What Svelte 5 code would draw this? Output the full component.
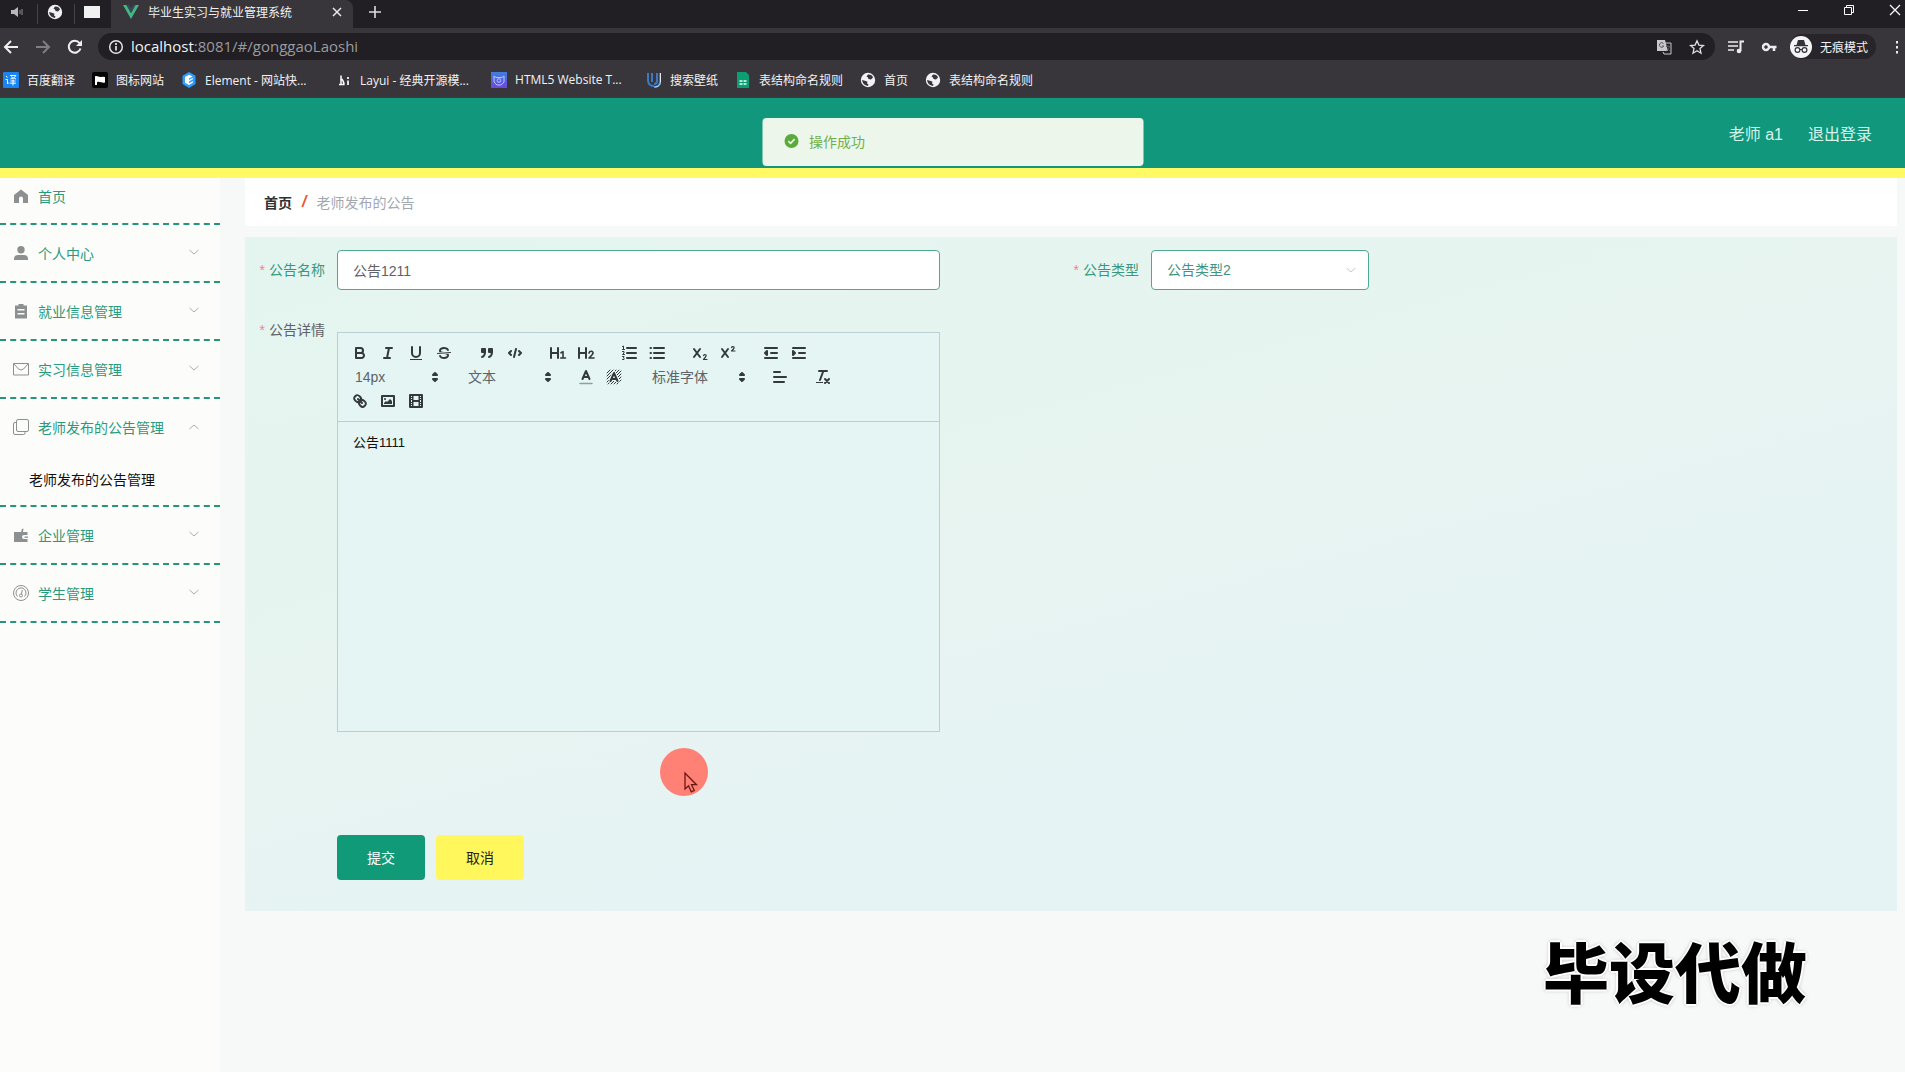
<script lang="ts">
	type Tool = { kind: 'button'; icon: string; label: string } | { kind: 'picker'; label: string; value: string; wide?: boolean };

	const bookmarks = [
		{ icon: 'translate', text: '百度翻译' },
		{ icon: 'flag', text: '图标网站' },
		{ icon: 'element', text: 'Element - 网站快...', cut: true },
		{ icon: 'layui', text: 'Layui - 经典开源模...', cut: true },
		{ icon: 'html5', text: 'HTML5 Website T...', cut: true },
		{ icon: 'wallpaper', text: '搜索壁纸' },
		{ icon: 'sheet', text: '表结构命名规则' },
		{ icon: 'globe', text: '首页' },
		{ icon: 'globe', text: '表结构命名规则' }
	];

	const siteIcons: Record<string, string> = {
		translate: '<rect width="16" height="16" rx="1" fill="#1a84f2"/><path d="M3 4l1.500 1.500M2.500 7.500h2v4.500l1.500-1.500M7 3.500h6c-1 2-3 3-5.500 3.500M8 4.500c1.500 1.500 3 2 5 2.500M7.500 9h5M7 11.200h6M10 7.500v6" stroke="#fff" fill="none"/>',
		flag: '<rect width="16" height="16" rx="2" fill="#050505"/><path d="M3 4.500c2-1.500 4 1.500 7 .2l3 .3v5.500c-3 1-5-1.500-8-.3V13H3z" fill="#fff"/>',
		element: '<path d="M8 0l6.500 3.700v8.400L8 16l-6.500-3.900V3.700z" fill="#2c9cff"/><path d="M11.500 4.500L8 2.700 4 5v5.700l4 2.300 3.800-2.200V9L8 11.200V9.500l3.800-2.200V5.800L8 8V6.500z" fill="#fff"/>',
		layui: '<path d="M3 12.500h5.500M5 3.500v9M5 6.500c2 1.500 3 3.500 3 6" stroke="#fff" stroke-width="1.500" fill="none"/><path d="M11 5h2v2h-2zM11 8.500h2V13h-2z" fill="#ddd"/>',
		html5: '<defs><linearGradient id="violet" x1="0" y1="0" x2="0" y2="1"><stop offset="0" stop-color="#3f7fe0"/><stop offset="1" stop-color="#7146dc"/></linearGradient></defs><rect width="16" height="16" fill="url(#violet)"/><path d="M3 4l2 1.500h6L13 4v6l-3 3H6l-3-3z" fill="none" stroke="#b3c7ff"/><circle cx="8" cy="8.500" r="1.800" fill="none" stroke="#b3c7ff"/>',
		wallpaper: '<path d="M2 1v7c0 4 2 6 6 6M6 1v9M11 1v8c0 2-1 3-3 3M14 1v8c0 4-2 6-6 6" fill="none" stroke="#3b79c5" stroke-width="2"/><path d="M14.500 1v8c0 4-2 6-6 6" fill="none" stroke="#d8e6f5"/>',
		sheet: '<path d="M2 0h9l3 3v13H2z" fill="#0c9d74"/><path d="M4.500 9h3M8.500 9h3M4.500 12h3M8.500 12h3" stroke="#e9fff5" stroke-width="1.500"/>',
		globe: '<circle cx="8" cy="8" r="7.200" fill="#f2f2f4"/><path d="M8 2.500c2.500-.3 4.500 1 5 3l-2 2-2.500-.5L8 5.500 6.500 4.500zM2 8l3 .7 2.500 1-.5 1.800 1.500 1-.5 1.500C4.500 13.500 2.500 11.500 2 8z" fill="#37353a"/>'
	};

	const menu = [
		{ icon: 'home', text: '首页' },
		{ icon: 'user', text: '个人中心', arrow: 'down' },
		{ icon: 'order', text: '就业信息管理', arrow: 'down' },
		{ icon: 'message', text: '实习信息管理', arrow: 'down' },
		{ icon: 'copy', text: '老师发布的公告管理', arrow: 'up', children: ['老师发布的公告管理'] },
		{ icon: 'wallet', text: '企业管理', arrow: 'down' },
		{ icon: 'odometer', text: '学生管理', arrow: 'down' }
	];

	const menuIcons: Record<string, string> = {
		home: '<path d="M8 1.500L1 7V15h5v-4.500a2 2 0 0 1 4 0V15h5V7z"/>',
		user: '<circle cx="8" cy="4.700" r="3.700"/><path d="M1 15v-1.500C1 11 3 10 5 10h6c2 0 4 1 4 3.500V15z"/>',
		order: '<path fill-rule="evenodd" d="M2 2.500h3.500V1h5v1.500H14V15.500H2zM4.500 6v1.500h7V6zm0 4v1.500h7V10z"/>',
		message: '<path d="M.500 2.500h15v11.500H.500zM1 3l4.500 5q2.500 2 5 0L15 3" class="line"/>',
		copy: '<rect x="3.500" y=".500" width="12" height="12" rx="1.500" class="line"/><path d="M3.500 3.500H2q-1.500 0-1.500 1.500v9q0 1.500 1.500 1.500h8.500q1.500 0 1.500-1.500v-1.500" class="line"/>',
		wallet: '<path d="M1 5h7l1-3 1.500-.5L10 5h4.500v3H11a2 2 0 0 0 0 4h3.500v3H1z"/><path d="M11.500 9.500H15v1.300h-3.500z"/>',
		odometer: '<circle cx="8" cy="8" r="7.500" class="line"/><path d="M4.500 11.500a5 5 0 1 1 7 0M8.500 9l.7-4" class="line"/><circle cx="8" cy="10.500" r="1.500" class="line"/>'
	};

	const toolIcons: Record<string, string> = {
		bold: '<path d="M5,4H9.500A2.500,2.500,0,0,1,12,6.500v0A2.500,2.500,0,0,1,9.500,9H5V4Z"/><path d="M5,9h5.500A2.500,2.500,0,0,1,13,11.500v0A2.500,2.500,0,0,1,10.500,14H5V9Z"/>',
		italic: '<path d="M7 4h6M5 14h6M8 14L10 4"/>',
		underline: '<path d="M5,3V9a4,4,0,0,0,4,4H9a4,4,0,0,0,4-4V3"/><rect class="fill" height="1" width="12" x="3" y="15"/>',
		strike: '<path d="M15.500 8.500L2.500 9.500" stroke-width="1"/><path class="fill" d="M9.007,8C6.542,7.791,6,7.519,6,6.500,6,5.792,7.283,5,9,5c1.571,0,2.765.679,2.969,1.309a1,1,0,0,0,1.900-.617C13.356,4.106,11.354,3,9,3,6.200,3,4,4.538,4,6.500a3.200,3.200,0,0,0,.500,1.843Z"/><path class="fill" d="M8.984,10C11.457,10.208,12,10.479,12,11.500c0,.708-1.283,1.500-3,1.500-1.571,0-2.765-.679-2.969-1.309a1,1,0,1,0-1.900.617C4.644,13.894,6.646,15,9,15c2.800,0,5-1.538,5-3.500a3.200,3.200,0,0,0-.500-1.843Z"/>',
		quote: '<rect class="both" height="3" width="3" x="4" y="5"/><rect class="both" height="3" width="3" x="11" y="5"/><path d="M7,8c0,4.031-3,5-3,5M14,8c0,4.031-3,5-3,5"/>',
		code: '<path d="M5 7L3 9l2 2M13 7l2 2-2 2M10 5L8 13"/>',
		h1: '<path d="M2 4v10M9 4v10M2 9h7"/><path d="M12 8.800L14 7.600V14M11.700 14h4.800" stroke-width="1.600"/>',
		h2: '<path d="M2 4v10M9 4v10M2 9h7"/><path d="M12 9q.5-1.800 2.300-1.700 2 .3 1.700 2-.5 1.500-4 4.700h5" stroke-width="1.600"/>',
		ordered: '<path d="M7 4h9M7 9h9M7 14h9"/><path d="M2.500 2.500l1-.5v3.500M2.500 5.500h2M2.500 7.500h1.500v1.500l-1.500 1.500h2M2.500 12.500H4l-.5 1.500q1 .5.500 1.500H2.500" stroke-width="1"/>',
		bullet: '<path d="M6 4h10M6 9h10M6 14h10"/><path d="M2.500 4h.5M2.500 9h.5M2.500 14h.5"/>',
		sub: '<path d="M3 5l6 8M9 5l-6 8"/><path d="M12.500 11.500q1-1.500 2.500-.5.800 1-2.500 4.500h3.500" stroke-width="1.200"/>',
		sup: '<path d="M3 5l6 8M9 5l-6 8"/><path d="M12.500 3.500Q13.500 2 15 3q.8 1-2.500 4h3.500" stroke-width="1.200"/>',
		outdent: '<path d="M3 14h12M3 4h12M9 9h6"/><path class="both" d="M5 7v4L3 9z"/>',
		indent: '<path d="M3 14h12M3 4h12M9 9h6"/><path class="both" d="M3 7v4l2-2z"/>',
		color: '<path d="M3 15.500h12" stroke="#8da09f" stroke-width="1.500"/><path d="M5.500 11L9 3l3.500 8M11.600 9H6.400"/>',
		background: '<path d="M2 5l3-3M2 8l6-6M2 11l9-9M2 14L14 2M3 16L16 3M6 16L16 6M9 16l7-7M12 16l4-4" stroke-width="1"/><path d="M5.500 13L9 5l3.500 8M11.500 11h-5" stroke="#e4f4f4" stroke-width="4"/><path d="M5.500 13L9 5l3.500 8M11.600 11H6.400"/>',
		align: '<path d="M3 9h12M3 14h10M3 4h6"/>',
		clean: '<path d="M5 3h8M6 12L9.350 3M11 11l4 4M15 11l-4 4"/><rect class="fill" height="1" width="7" x="2" y="14"/>',
		link: '<path d="M7 7l4 4"/><path d="M8.900,4.577a3.476,3.476,0,0,1,.360,4.679A3.476,3.476,0,0,1,4.577,8.900C3.185,7.500,2.035,6.400,4.217,4.217S7.500,3.185,8.900,4.577Z"/><path d="M13.423,9.100a3.476,3.476,0,0,0-4.679-.360,3.476,3.476,0,0,0,.360,4.679c1.392,1.392,2.500,2.542,4.679.360S14.815,10.500,13.423,9.100Z"/>',
		image: '<rect height="10" width="12" x="3" y="4"/><circle class="fill" cx="6" cy="7" r="1"/><path class="fill" d="M5 12v-1l2-2 1 1 3-3 2 2v3z"/>',
		video: '<rect height="12" width="12" x="3" y="3"/><path class="fill" d="M5 3h1.500v12H5zM11.500 3H13v12h-1.500zM5 8h8v2H5zM3 5h3v1H3zM3 7h3v1H3zM3 10h3v1H3zM3 12h3v1H3zM12 5h3v1h-3zM12 7h3v1h-3zM12 10h3v1h-3zM12 12h3v1h-3z"/>'
	};

	const btn = (icon: string, label: string): Tool => ({ kind: 'button', icon, label });

	const toolbar: Tool[][] = [
		[btn('bold', '加粗'), btn('italic', '斜体'), btn('underline', '下划线'), btn('strike', '删除线')],
		[btn('quote', '引用'), btn('code', '代码')],
		[btn('h1', '标题1'), btn('h2', '标题2')],
		[btn('ordered', '有序列表'), btn('bullet', '无序列表')],
		[btn('sub', '下标'), btn('sup', '上标')],
		[btn('outdent', '减少缩进'), btn('indent', '增加缩进')],
		[{ kind: 'picker', label: '字号', value: '14px' }],
		[{ kind: 'picker', label: '段落', value: '文本' }],
		[btn('color', '文字颜色'), btn('background', '背景颜色')],
		[{ kind: 'picker', label: '字体', value: '标准字体', wide: true }],
		[btn('align', '对齐')],
		[btn('clean', '清除格式')],
		[btn('link', '链接'), btn('image', '图片'), btn('video', '视频')]
	];

	let title = $state('公告1211');
	let noticeType = $state('公告类型2');
</script>

<svelte:head>
	<title>毕业生实习与就业管理系统</title>
</svelte:head>

<div class="screen">
	<div class="chrome">
		<div class="tabs">
			<div class="tabs__pinned">
				<svg width="16" height="16" viewBox="0 0 16 16"><path d="M2 6h3l4-3v10L5 10H2z" fill="#b9b9bb" /><path d="M11 6v4M13 5v6" stroke="#8d8d90" /></svg>
			</div>
			<div class="tabs__pinned">
				<svg width="16" height="16" viewBox="0 0 16 16">{@html siteIcons.globe}</svg>
			</div>
			<div class="tabs__pinned">
				<svg width="18" height="16" viewBox="0 0 18 16"><rect x="1" y="2" width="16" height="12" fill="#f1f1f1" /></svg>
			</div>
			<div class="tabs__active">
				<svg width="16" height="16" viewBox="0 0 16 16"><path d="M0 1h3.500L8 9l4.500-8H16L8 15z" fill="#41b883" /><path d="M3.500 1H6l2 3.500L10 1h2.500L8 9z" fill="#35495e" /></svg>
				<span class="tabs__title">毕业生实习与就业管理系统</span>
				<button class="icon-btn" aria-label="关闭标签页">
					<svg width="10" height="10" viewBox="0 0 10 10"><path d="M1 1l8 8M9 1l-8 8" stroke="#e8e8ea" stroke-width="1.500" /></svg>
				</button>
			</div>
			<button class="icon-btn tabs__new" aria-label="新标签页">
				<svg width="12" height="12" viewBox="0 0 12 12"><path d="M6 0v12M0 6h12" stroke="#dcdcde" stroke-width="1.600" /></svg>
			</button>
			<div class="window-controls">
				<button class="icon-btn" aria-label="最小化"><svg width="12" height="12" viewBox="0 0 12 12"><path d="M1 6.500h10" stroke="#fff" /></svg></button>
				<button class="icon-btn" aria-label="还原"><svg width="12" height="12" viewBox="0 0 12 12"><path d="M1.500 3.500h7v7h-7zM3.500 3V1.500h7v7H9" stroke="#fff" fill="none" /></svg></button>
				<button class="icon-btn" aria-label="关闭"><svg width="12" height="12" viewBox="0 0 12 12"><path d="M1 1l10 10M11 1L1 11" stroke="#fff" stroke-width="1.200" /></svg></button>
			</div>
		</div>

		<div class="address">
			<div class="address__nav">
				<button class="icon-btn" aria-label="后退"><svg width="16" height="16" viewBox="0 0 16 16"><path d="M15 8H2M8 2L2 8l6 6" stroke="#f0f0f0" stroke-width="2" fill="none" /></svg></button>
				<button class="icon-btn" aria-label="前进"><svg width="16" height="16" viewBox="0 0 16 16"><path d="M1 8h13M8 2l6 6-6 6" stroke="#7f7e82" stroke-width="2" fill="none" /></svg></button>
				<button class="icon-btn" aria-label="刷新"><svg width="16" height="16" viewBox="0 0 16 16"><path d="M13.500 9.500A6 6 0 1 1 12.500 4" stroke="#f0f0f0" stroke-width="2" fill="none" /><path d="M15 1v6H9z" fill="#f0f0f0" /></svg></button>
			</div>
			<div class="address__bar">
				<svg width="16" height="16" viewBox="0 0 16 16"><circle cx="8" cy="8" r="6.300" stroke="#e4e4e6" stroke-width="1.500" fill="none" /><path d="M8 7v4.500M8 4v2" stroke="#e4e4e6" stroke-width="1.700" /></svg>
				<span class="address__url"><b>localhost</b>:8081/#/gonggaoLaoshi</span>
				<button class="icon-btn" aria-label="翻译此页"><svg width="16" height="16" viewBox="0 0 16 16"><path d="M1 1h8l3 11H1z" fill="#c9c9cb" /><path d="M9.500 4H15v11H8l-1-2" stroke="#c9c9cb" fill="none" /><path d="M7.500 4.500a2.300 2.300 0 1 0 .3 2.500H6M10 7.500h4M12 6v1.500M13.500 8c-.5 2-1.500 3-3 4M11 9l3 3" stroke="#55545a" fill="none" /></svg></button>
				<button class="icon-btn" aria-label="收藏"><svg width="16" height="16" viewBox="0 0 16 16"><path d="M8 1.800l1.900 4.300 4.600.4-3.500 3.100 1 4.600L8 11.800l-4 2.400 1-4.600L1.500 6.500l4.600-.4z" stroke="#e0e0e2" stroke-width="1.300" fill="none" /></svg></button>
			</div>
			<button class="icon-btn" aria-label="媒体控制"><svg width="16" height="16" viewBox="0 0 16 16"><path d="M0 3h10M0 7h10M0 11h6" stroke="#ececee" stroke-width="1.700" /><path d="M12.500 12V2.500H16" stroke="#ececee" stroke-width="2" fill="none" /><circle cx="11" cy="12" r="2.300" fill="#ececee" /></svg></button>
			<button class="icon-btn" aria-label="密码"><svg width="16" height="16" viewBox="0 0 16 16"><circle cx="5" cy="8" r="3" stroke="#ececee" stroke-width="2.400" fill="none" /><path d="M8 8h7.500M13 8v4" stroke="#ececee" stroke-width="2.600" /></svg></button>
			<button class="incognito">
				<svg width="22" height="22" viewBox="0 0 22 22"><circle cx="11" cy="11" r="11" fill="#f4f4f6" /><path d="M8 4h6l1.500 5h-9zM4 9h14v1.300H4z" fill="#333238" /><circle cx="7.500" cy="14" r="2.400" stroke="#333238" stroke-width="1.200" fill="none" /><circle cx="14.500" cy="14" r="2.400" stroke="#333238" stroke-width="1.200" fill="none" /><path d="M10 13.500h2" stroke="#333238" /></svg>
				无痕模式
			</button>
			<button class="icon-btn" aria-label="更多"><svg width="16" height="16" viewBox="0 0 16 16"><path d="M7 2h2v2.500H7zM7 7h2v2.500H7zM7 12h2v2.500H7z" fill="#ececee" /></svg></button>
		</div>

		<nav class="bookmarks" aria-label="书签">
			{#each bookmarks as mark}
				<a href="#/" class:cut={mark.cut}><svg width="16" height="16" viewBox="0 0 16 16">{@html siteIcons[mark.icon]}</svg>{mark.text}</a>
			{/each}
		</nav>
	</div>

	<header class="header">
		<span>老师 a1</span>
		<button class="header__logout">退出登录</button>
		<div class="toast" role="status">
			<svg width="16" height="16" viewBox="0 0 16 16"><circle cx="8" cy="8" r="7" fill="#5aab3a" /><path d="M4.800 8.200l2.300 2.200 4-4.300" stroke="#f0f8ec" stroke-width="1.600" fill="none" /></svg>
			操作成功
		</div>
	</header>

	<div class="body">
		<aside class="sidebar">
			{#each menu as item}
				<div class="menu-item">
					<a href="#/" class="menu-item__title">
						<svg width="16" height="16" viewBox="0 0 16 16">{@html menuIcons[item.icon]}</svg>
						<span>{item.text}</span>
						{#if item.arrow}
							<svg class="menu-item__arrow" width="10" height="10" viewBox="0 0 10 10"><path d={item.arrow === 'up' ? 'M.5 7L5 3l4.500 4' : 'M.5 2L5 6l4.500-4'} /></svg>
						{/if}
					</a>
					{#each item.children ?? [] as child}
						<a href="#/gonggaoLaoshi" class="menu-item__child">{child}</a>
					{/each}
				</div>
			{/each}
		</aside>

		<main class="main">
			<nav class="breadcrumb" aria-label="面包屑">
				<a href="#/">首页</a>
				<span class="breadcrumb__slash">/</span>
				<span>老师发布的公告</span>
			</nav>

			<form class="form" onsubmit={(e) => e.preventDefault()}>
				<div class="form__row">
					<div class="field">
						<label class="field__label" for="title">公告名称</label>
						<input id="title" class="field__input" type="text" bind:value={title} />
					</div>
					<div class="field">
						<label class="field__label" for="type">公告类型</label>
						<div class="field__select">
							<select id="type" class="field__input" bind:value={noticeType}>
								<option>公告类型1</option>
								<option>公告类型2</option>
							</select>
							<svg width="10" height="10" viewBox="0 0 10 10"><path d="M.5 3L5 7l4.500-4" /></svg>
						</div>
					</div>
				</div>

				<div class="field">
					<span class="field__label field__label--dark" id="detail">公告详情</span>
					<div class="editor">
						<div class="editor__toolbar">
							{#each toolbar as group}
								<span class="editor__group">
									{#each group as tool}
										{#if tool.kind === 'button'}
											<button type="button" aria-label={tool.label}>
												<svg width="18" height="18" viewBox="0 0 18 18">{@html toolIcons[tool.icon]}</svg>
											</button>
										{:else}
											<span class="picker" class:picker--wide={tool.wide}>
												<select aria-label={tool.label}><option>{tool.value}</option></select>
												<svg width="18" height="18" viewBox="0 0 18 18"><path class="both" d="M7 11l2 2 2-2zM7 7l2-2 2 2z" /></svg>
											</span>
										{/if}
									{/each}
								</span>
							{/each}
						</div>
						<div class="editor__content" contenteditable="true" role="textbox" tabindex="0" aria-labelledby="detail">公告1111</div>
					</div>
				</div>

				<div class="form__actions">
					<button type="submit" class="btn btn--submit">提交</button>
					<button type="button" class="btn btn--cancel">取消</button>
				</div>
			</form>
		</main>
	</div>

	<div class="pointer">
		<svg width="48" height="48" viewBox="0 0 48 48"><circle cx="24" cy="24" r="24" fill="#ff8175" /><path d="M25 25v16l3.500-3.200 2.800 6 3-1.300-2.800-5.800h5z" fill="#ff8175" stroke="#6b1713" stroke-width="1.300" /></svg>
	</div>
	<div class="watermark">毕设代做</div>
</div>

<style>
	:global(body) {
		background: #f6f9f8;
	}

	.screen {
		--green: #11987c;
		position: relative;
		display: flex;
		flex-direction: column;
		min-height: 100vh;
		overflow: hidden;
		font-family: 'Liberation Sans', 'Noto Sans CJK SC', sans-serif;
		font-size: 14px;
		color: #606266;
	}

	.screen * {
		box-sizing: border-box;
	}

	.screen svg {
		flex: none;
		display: block;
	}

	button,
	input,
	select {
		font: inherit;
		color: inherit;
	}

	button {
		cursor: pointer;
	}

	a {
		color: inherit;
		text-decoration: none;
	}

	/* Browser chrome */
	.chrome {
		background: #38363b;
		color: #f2f2f4;
		font-family: 'Open Sans', 'Noto Sans CJK SC', sans-serif;
		font-size: 12px;
		border-bottom: 1px solid #1d4a42;
	}

	.icon-btn {
		display: flex;
		padding: 0;
		border: 0;
		background: none;
	}

	.tabs {
		display: flex;
		align-items: center;
		height: 28px;
		background: #211f23;
	}

	.tabs__pinned {
		display: flex;
		justify-content: center;
		width: 37px;
		padding: 0 3px 4px 0;
	}

	.tabs__pinned + .tabs__pinned {
		border-left: 1px solid #454448;
	}

	.tabs__active {
		display: flex;
		align-items: center;
		gap: 9px;
		width: 242px;
		height: 28px;
		padding: 0 11px 4px 12px;
		border-radius: 0 8px 0 0;
		background: #38363b;
	}

	.tabs__title {
		flex: 1;
		white-space: nowrap;
	}

	.tabs__new {
		margin-left: 16px;
		padding-bottom: 4px;
	}

	.window-controls {
		display: flex;
		gap: 34px;
		margin-left: auto;
		padding: 0 4px 8px 0;
	}

	.address {
		display: flex;
		align-items: center;
		gap: 17px;
		height: 37px;
	}

	.address__nav {
		display: flex;
		gap: 16px;
		padding-left: 3px;
	}

	.address__bar {
		display: flex;
		flex: 1;
		align-items: center;
		gap: 17px;
		height: 27px;
		margin: 0 -4px 0 -2px;
		padding: 0 10px;
		border-radius: 14px;
		background: #211f23;
	}

	.address__url {
		flex: 1;
		margin-left: -10px;
		font-size: 15px;
		line-height: 24px;
		padding-bottom: 1px;
		color: #9b9a9f;
	}

	.address__url b {
		font-weight: 400;
		color: #f2f2f4;
	}

	.incognito {
		display: flex;
		align-items: center;
		gap: 8px;
		height: 25px;
		margin: 0 -4px;
		padding: 0 8px 0 0;
		border: 0;
		border-radius: 12px;
		background: #27252a;
	}

	.bookmarks {
		display: flex;
		gap: 17px;
		height: 32px;
		padding: 0 3px 3px;
	}

	.bookmarks a {
		display: flex;
		align-items: center;
		gap: 8px;
		white-space: nowrap;
	}

	.bookmarks .cut {
		min-width: 138px;
	}

	/* Header */
	.header {
		position: relative;
		display: flex;
		align-items: center;
		justify-content: flex-end;
		gap: 25px;
		height: 80px;
		padding: 0 33px;
		border-bottom: 10px solid #fffa63;
		background: var(--green);
		color: #d6f3ea;
		font-size: 16px;
	}

	.header__logout {
		padding: 0;
		border: 0;
		background: none;
	}

	.toast {
		position: absolute;
		top: 20px;
		left: 50%;
		display: flex;
		align-items: center;
		gap: 10px;
		width: 381px;
		height: 48px;
		padding: 0 21px 2px;
		border-radius: 4px;
		background: #edf6ea;
		color: #6fb04e;
		font-size: 14px;
		transform: translateX(-50%);
	}

	/* Sidebar */
	.body {
		display: flex;
		flex: 1;
		gap: 25px;
		padding-right: 8px;
	}

	.sidebar {
		width: 220px;
		background: #fcfdfb;
	}

	.menu-item {
		border-bottom: 2px dashed #259679;
	}

	.menu-item__title {
		display: flex;
		align-items: center;
		gap: 9px;
		height: 56px;
		padding: 0 21px 0 13px;
		color: #2a9a7d;
	}

	.menu-item:first-child .menu-item__title {
		height: 45px;
		padding-bottom: 10px;
	}

	.menu-item__title svg {
		fill: #8d9090;
	}

	.menu-item__title :global(.line) {
		fill: none;
		stroke: #8d9090;
	}

	.menu-item__title .menu-item__arrow {
		margin-left: auto;
		fill: none;
		stroke: #a9adad;
	}

	.menu-item__child {
		display: flex;
		align-items: center;
		height: 50px;
		padding: 0 29px 2px;
		color: #111;
	}

	/* Main */
	.main {
		flex: 1;
		min-width: 0;
	}

	.breadcrumb {
		display: flex;
		align-items: center;
		gap: 10px;
		height: 48px;
		margin-bottom: 11px;
		padding: 0 19px;
		background: #fff;
		color: #a3a8b0;
	}

	.breadcrumb a {
		color: #303133;
		font-weight: 700;
	}

	.breadcrumb__slash {
		color: #f0552d;
		font-size: 16px;
		font-style: italic;
		font-weight: 700;
	}

	.form {
		padding: 13px 12px 31px;
		background: linear-gradient(165deg, #e4f5ef, #e7f4f0 40%, #e6f3f5 75%);
	}

	.form__row {
		display: grid;
		grid-template-columns: 1fr 1fr;
		margin-bottom: 20px;
	}

	.field {
		display: flex;
	}

	.field__label {
		flex: none;
		width: 80px;
		padding-right: 12px;
		line-height: 40px;
		text-align: right;
		white-space: nowrap;
		color: #36997f;
	}

	.field__label::before {
		content: '*';
		margin-right: 4px;
		color: #f3858a;
	}

	.field__label--dark {
		color: #606266;
	}

	.field__input {
		flex: 1;
		width: 100%;
		max-width: 603px;
		height: 40px;
		padding: 0 15px;
		border: 1px solid #4fa992;
		border-radius: 4px;
		outline: 0;
		background: #fff;
	}

	.field__select {
		position: relative;
		width: 218px;
	}

	.field__select select {
		appearance: none;
		color: #3f957f;
	}

	.field__select svg {
		position: absolute;
		top: 15px;
		right: 13px;
		fill: none;
		stroke: #c4c8cc;
		pointer-events: none;
	}

	.editor {
		flex: 1;
		max-width: 603px;
		margin-top: 22px;
		border: 1px solid #b9cfd0;
		background: #e4f5f4;
	}

	.editor__toolbar {
		display: flex;
		flex-wrap: wrap;
		padding: 8px;
		border-bottom: 1px solid #b9cfd0;
	}

	.editor__group {
		display: flex;
		margin-right: 15px;
	}

	.editor__group button {
		width: 28px;
		height: 24px;
		padding: 3px 5px;
		border: 0;
		background: none;
	}

	.editor__group svg {
		fill: none;
		stroke: #34393a;
		stroke-width: 2;
		stroke-linecap: round;
		stroke-linejoin: round;
	}

	.editor__group :global(.fill) {
		fill: #34393a;
		stroke: none;
	}

	.editor__group :global(.both) {
		fill: #34393a;
	}

	.picker {
		position: relative;
		width: 98px;
	}

	.picker--wide {
		width: 108px;
	}

	.picker select {
		width: 100%;
		height: 24px;
		padding: 0 9px;
		border: 0;
		background: none;
		appearance: none;
	}

	.picker svg {
		position: absolute;
		top: 3px;
		right: 0;
		pointer-events: none;
	}

	.editor__content {
		min-height: 309px;
		padding: 11px 15px;
		outline: 0;
		line-height: 20px;
		font-size: 13px;
		color: #111;
	}

	.form__actions {
		display: flex;
		gap: 11px;
		margin: 103px 0 0 80px;
	}

	.btn {
		width: 88px;
		height: 45px;
		padding: 0 0 2px;
		border: 0;
		border-radius: 4px;
	}

	.btn--submit {
		background: #119a78;
		color: #fff;
	}

	.btn--cancel {
		background: #fff75c;
		color: #222;
	}

	/* Overlays */
	.pointer {
		position: absolute;
		top: 748px;
		left: 660px;
		pointer-events: none;
	}

	.watermark {
		position: absolute;
		right: 98px;
		bottom: 55px;
		color: #000;
		font-family: 'Noto Sans CJK SC', sans-serif;
		font-size: 66px;
		font-weight: 900;
		line-height: 96px;
		text-shadow: 2px 0 #fff, -2px 0 #fff, 0 2px #fff, 0 -2px #fff, 0 0 4px #777;
		pointer-events: none;
	}
</style>
